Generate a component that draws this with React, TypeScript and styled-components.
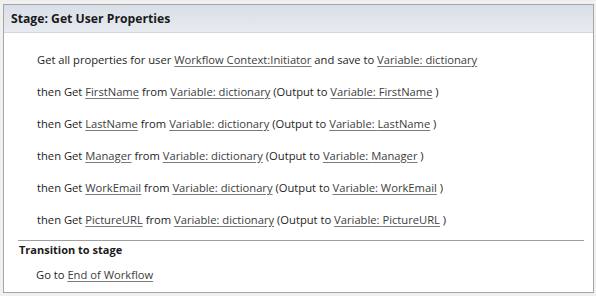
import React from "react";
import styled, { createGlobalStyle } from "styled-components";

const GlobalStyle = createGlobalStyle`
  html, body { margin: 0; padding: 0; background: #f0f0f0; }
  body { font-family: "Open Sans", "Noto Sans", sans-serif; }
`;

const Page = styled.div`
  width: 596px;
  height: 296px;
  padding: 4px 3px 3px 3px;
  box-sizing: border-box;
`;

const Panel = styled.div`
  width: 591px;
  height: 289px;
  box-sizing: border-box;
  border: 1px solid #a6a6a6;
  background: #ffffff;
  display: flex;
  flex-direction: column;
`;

const Header = styled.div`
  height: 28px;
  box-sizing: border-box;
  background: linear-gradient(#d9dfe7, #e7ebf0);
  border-bottom: 1px solid #d2d7de;
  display: flex;
  align-items: center;
  padding-left: 7px;
  font-size: 12.2px;
  font-weight: 700;
  color: #1a1a1a;
`;

const Steps = styled.div`
  display: flex;
  flex-direction: column;
  padding: 10px 0 0 33px;
`;

const Row = styled.div`
  height: 32px;
  display: flex;
  align-items: center;
  font-size: 11.2px;
  color: #1e1e1e;
  white-space: pre;
`;

const Link = styled.span`
  color: #3d3d3d;
  text-decoration: underline;
  text-decoration-color: #7a7a7a;
  text-underline-offset: 2px;
`;

const Transition = styled.div`
  margin: 5px 9px 0 14px;
  border-top: 1px solid #a0a0a0;
  display: flex;
  flex-direction: column;
`;

const TransitionTitle = styled.div`
  font-size: 11px;
  font-weight: 700;
  color: #1a1a1a;
  padding: 0 0 0 1px;
  height: 17px;
  display: flex;
  align-items: center;
`;

const GoRow = styled(Row)`
  height: 32px;
  padding-left: 18px;
`;

const gets = ["FirstName", "LastName", "Manager", "WorkEmail", "PictureURL"];

export default function App() {
  return (
    <>
      <GlobalStyle />
      <Page>
        <Panel>
          <Header>Stage: Get User Properties</Header>
          <Steps>
            <Row>
              Get all properties for user <Link>Workflow Context:Initiator</Link> and save to{" "}
              <Link>Variable: dictionary</Link>
            </Row>
            {gets.map((g) => (
              <Row key={g}>
                then Get <Link>{g}</Link> from <Link>Variable: dictionary</Link> (Output to{" "}
                <Link>Variable: {g}</Link> )
              </Row>
            ))}
          </Steps>
          <Transition>
            <TransitionTitle>Transition to stage</TransitionTitle>
            <GoRow>
              Go to <Link>End of Workflow</Link>
            </GoRow>
          </Transition>
        </Panel>
      </Page>
    </>
  );
}
